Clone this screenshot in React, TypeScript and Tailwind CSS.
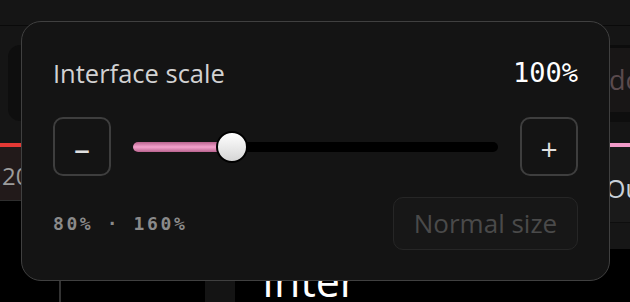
import React from "react";

const sans = { fontFamily: '"Open Sans", "Noto Sans", sans-serif' };
const mono = { fontFamily: '"DejaVu Sans Mono", "Liberation Mono", monospace' };

function ScaleSlider({ value, min, max }: { value: number; min: number; max: number }) {
  const pct = (value - min) / (max - min);
  // thumb center follows native range math: edge + radius + pct * (width - diameter)
  const left = `calc(${pct} * (100% - 32px))`;
  return (
    <div className="relative h-[10px] flex-1 rounded-full bg-black">
      <div
        className="absolute left-0 top-0 h-full rounded-full bg-gradient-to-b from-[#b9648f] via-[#f4a2cd] to-[#b9648f]"
        style={{ width: `calc(${pct} * (100% - 32px) + 16px)` }}
      />
      <div
        className="absolute top-1/2 h-[32px] w-[32px] -translate-y-1/2 rounded-full border-2 border-black bg-gradient-to-b from-white to-[#d6d6d6]"
        style={{ left }}
      />
    </div>
  );
}

export default function App() {
  return (
    <div className="relative h-[302px] w-[630px] overflow-hidden bg-[#151515]" style={sans}>
      {/* app chrome behind the popover */}
      <div className="h-[26px] border-b border-[#0a0a0a]" />
      <div className="flex h-[117px] items-start justify-between">
        <div className="ml-[8px] mt-[19px] h-[76px] w-[90px] rounded-[12px] bg-[#0e0e0e]" />
        <div className="mt-[19px] flex w-[30px] flex-col">
          <div className="h-[3px] bg-[#0c0c0c]" />
          <div className="flex h-[64px] items-center overflow-hidden whitespace-nowrap bg-[#181616] pl-[9px] text-[27px] text-[#5a4a4d]">
            do
          </div>
          <div className="h-[10px] bg-[#0e0e0e]" />
        </div>
      </div>
      <div className="flex h-[159px] bg-black">
        <div className="flex w-[600px] flex-col">
          <div className="h-[68px] border-t-4 border-[#e53935] bg-[#221a1a] pl-[2px] pt-[14px] text-[24px] leading-[30px] text-[#9c9c9c]">
            2026
          </div>
          <div className="flex flex-1 border-t border-[#2e2e2e]">
            <div className="w-[61px] border-r-2 border-[#333]" />
            <div className="w-[144px]" />
            <div className="w-[30px] bg-[#141414]" />
            <div className="pl-[27px] pt-[58px] text-[43px] leading-none text-white">Inter</div>
          </div>
        </div>
        <div className="flex w-[30px] flex-col">
          <div className="h-[80px] overflow-hidden whitespace-nowrap border-t-4 border-[#f29bc9] border-b border-b-[#0e0e0e] bg-[#1a1a1a] pl-[6px] pt-[26px] text-[25px] leading-[30px] text-[#c9d1d9]">
            Output
          </div>
          <div className="h-[26px] bg-[#161616]" />
        </div>
      </div>

      {/* Interface scale popover */}
      <div className="absolute left-[21px] top-[21px] flex h-[260px] w-[589px] flex-col rounded-[20px] border border-[#404040] bg-[#141414] px-[31px] pt-[34px]">
        <div className="flex h-[34px] items-center justify-between">
          <span className="text-[25.5px] leading-[34px] text-[#d2d2d2]">Interface scale</span>
          <span className="text-[27px] leading-[34px] text-white" style={mono}>
            100%
          </span>
        </div>
        <div className="mt-[27px] flex h-[59px] items-center gap-[22px]">
          <button className="flex h-[59px] w-[58px] items-center justify-center rounded-[10px] border-2 border-[#3e3e3e] pt-[4px] text-[32px] leading-none text-[#e0e0e0]">
            –
          </button>
          <ScaleSlider value={100} min={80} max={160} />
          <button className="flex h-[59px] w-[58px] items-center justify-center rounded-[10px] border-2 border-[#3e3e3e] pt-[4px] text-[30px] leading-none text-[#e0e0e0]">
            +
          </button>
        </div>
        <div className="mt-[21px] flex h-[53px] items-center justify-between">
          <span className="text-[18px] font-bold tracking-[2.6px] text-[#8a8a8a]" style={mono}>
            80% · 160%
          </span>
          <button className="h-[53px] w-[185px] rounded-[10px] border border-[#262626] bg-[#171717] text-[26px] text-[#4a4a4a]">
            Normal size
          </button>
        </div>
      </div>
    </div>
  );
}
